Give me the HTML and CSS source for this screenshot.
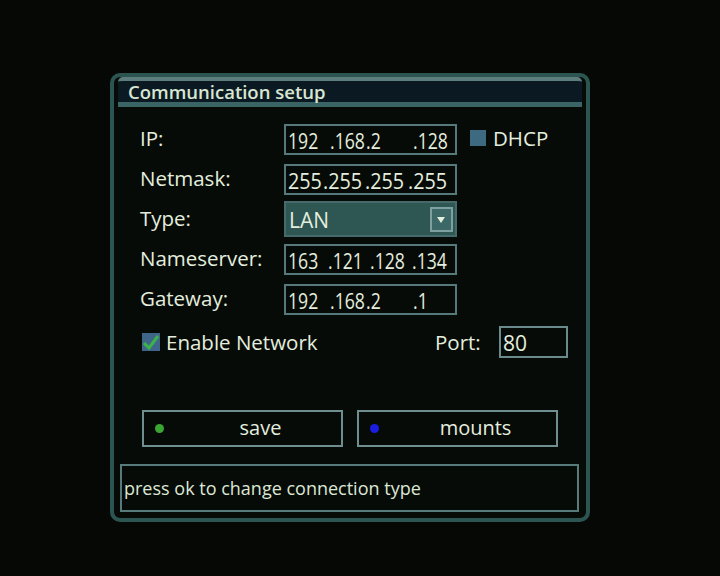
FILE: index.html
```html
<!DOCTYPE html>
<html lang="en">
<head>
    <meta charset="UTF-8">
    <title>Communication setup</title>
    <link rel="stylesheet" href="styles.css">
</head>
<body>

<div class="window">
    <div class="title-bar">Communication setup</div>

    <div class="content">
        <div class="form">
            <div class="row">
                <span class="label">IP:</span>
                <span class="field ip"><span>192</span><span>.168</span><span>.2</span><span>.128</span></span>
                <span class="check dhcp"></span>
                <span class="check-text">DHCP</span>
            </div>
            <div class="row">
                <span class="label">Netmask:</span>
                <span class="field mask"><span>255</span><span>.255</span><span>.255</span><span>.255</span></span>
            </div>
            <div class="row">
                <span class="label">Type:</span>
                <span class="field select">LAN<span class="arrow"></span></span>
            </div>
            <div class="row">
                <span class="label">Nameserver:</span>
                <span class="field dns"><span>163</span><span>.121</span><span>.128</span><span>.134</span></span>
            </div>
            <div class="row">
                <span class="label">Gateway:</span>
                <span class="field ip"><span>192</span><span>.168</span><span>.2</span><span>.1</span></span>
            </div>
        </div>

        <div class="network-row">
            <span class="check enabled">
                <svg width="18" height="18" viewBox="0 0 18 18">
                    <path d="M2 10 L7 15 L16 3" fill="none" stroke="#3bb34a" stroke-width="3"/>
                </svg>
            </span>
            <span class="check-text">Enable Network</span>
            <span class="port-label">Port:</span>
            <span class="field port">80</span>
        </div>

        <div class="buttons">
            <div class="button"><span class="dot green"></span><span class="button-text">save</span></div>
            <div class="button"><span class="dot blue"></span><span class="button-text">mounts</span></div>
        </div>
    </div>

    <div class="status">press ok to change connection type</div>
</div>

</body>
</html>
```

FILE: styles.css
```css
body {
    margin: 0;
    background: #050805;
    font-family: 'Open Sans', 'DejaVu Sans', sans-serif;
    color: #e4eede;
    height: 576px;
    overflow: hidden;
}

.window {
    width: 480px;
    height: 449px;
    margin: 73px 0 0 110px;
    border: 4px solid #2c5552;
    border-radius: 10px;
    background: #070b08;
    padding: 0 4px 6px 4px;
    box-sizing: border-box;
    display: flex;
    flex-direction: column;
}

.title-bar {
    height: 30px;
    box-sizing: border-box;
    border-top: 4px solid #5e7e7e;
    border-bottom: 5px solid #3b6564;
    background: #0b1a22;
    border-radius: 5px 5px 0 0;
    font-size: 18.5px;
    font-weight: 600;
    line-height: 21px;
    padding-left: 10px;
    color: #d8e6d2;
}

.content {
    padding: 16px 0 0 22px;
    flex: 1;
}

.form {
    display: flex;
    flex-direction: column;
    gap: 8px;
}

.row {
    display: flex;
    align-items: center;
    height: 32px;
}

.label {
    width: 144px;
    font-size: 20.5px;
    margin-top: -3px;
}

.field {
    width: 173px;
    height: 31px;
    border: 2px solid #55787a;
    font-size: 21px;
    line-height: 30px;
    padding-left: 2px;
    box-sizing: border-box;
    white-space: nowrap;
    position: relative;
}

/* the receiver font is narrow, so the octets are squeezed into their cells */
.ip span,
.dns span,
.mask span {
    display: inline-block;
    transform: scaleX(0.84);
    transform-origin: left center;
}

.mask span {
    transform: scaleX(0.94);
}

.ip span:nth-child(1) { width: 42px; }
.ip span:nth-child(2) { width: 36px; }
.ip span:nth-child(3) { width: 47px; }

.dns span:nth-child(1) { width: 40px; }
.dns span:nth-child(2) { width: 42px; }
.dns span:nth-child(3) { width: 42px; }

.mask span:nth-child(1) { width: 35px; }
.mask span:nth-child(2) { width: 42px; }
.mask span:nth-child(3) { width: 43px; }

.select {
    background: #2e5653;
    height: 36px;
    line-height: 35px;
    border-color: #46696a;
    padding-left: 3px;
}

.arrow {
    position: absolute;
    right: 2px;
    top: 4px;
    width: 23px;
    height: 25px;
    border: 2px solid #7fa0a0;
    background: #3c6868;
    box-sizing: border-box;
}

.arrow:after {
    content: "";
    position: absolute;
    left: 5px;
    top: 8px;
    border-left: 4.5px solid transparent;
    border-right: 4.5px solid transparent;
    border-top: 6px solid #e4eede;
}

.check {
    width: 16px;
    height: 16px;
    display: inline-block;
    background: #3d6a80;
}

.dhcp {
    margin-left: 13px;
    margin-top: -3px;
}

.check-text {
    font-size: 20.5px;
    margin-left: 7px;
    margin-top: -3px;
}

.network-row {
    display: flex;
    align-items: center;
    margin-top: 11px;
    height: 32px;
    width: 428px;
    padding-left: 2px;
    box-sizing: border-box;
}

.enabled {
    width: 18px;
    height: 18px;
    background: #3f6688;
    margin-top: 0;
}

.enabled + .check-text {
    margin-left: 6px;
    margin-top: 0;
}

.port-label {
    font-size: 20.5px;
    margin-left: auto;
    width: 64px;
}

.port {
    width: 69px;
    height: 32px;
    border-color: #6a8a8c;
}

.buttons {
    display: flex;
    gap: 14px;
    margin-top: 52px;
    padding-left: 2px;
}

.button {
    width: 201px;
    height: 37px;
    border: 2px solid #6e8e90;
    box-sizing: border-box;
    display: flex;
    align-items: center;
    font-size: 20px;
}

.dot {
    width: 9px;
    height: 9px;
    border-radius: 50%;
    margin-left: 11px;
}

.green {
    background: #3aa532;
}

.blue {
    background: #1a1ee0;
}

.button-text {
    flex: 1;
    text-align: center;
    margin-left: 16px;
    margin-top: -3px;
}

.status {
    height: 48px;
    box-sizing: border-box;
    border: 2px solid #577a7a;
    margin: 0 3px 0 2px;
    font-size: 18px;
    line-height: 44px;
    padding-left: 2px;
    color: #dce8d4;
}
```
